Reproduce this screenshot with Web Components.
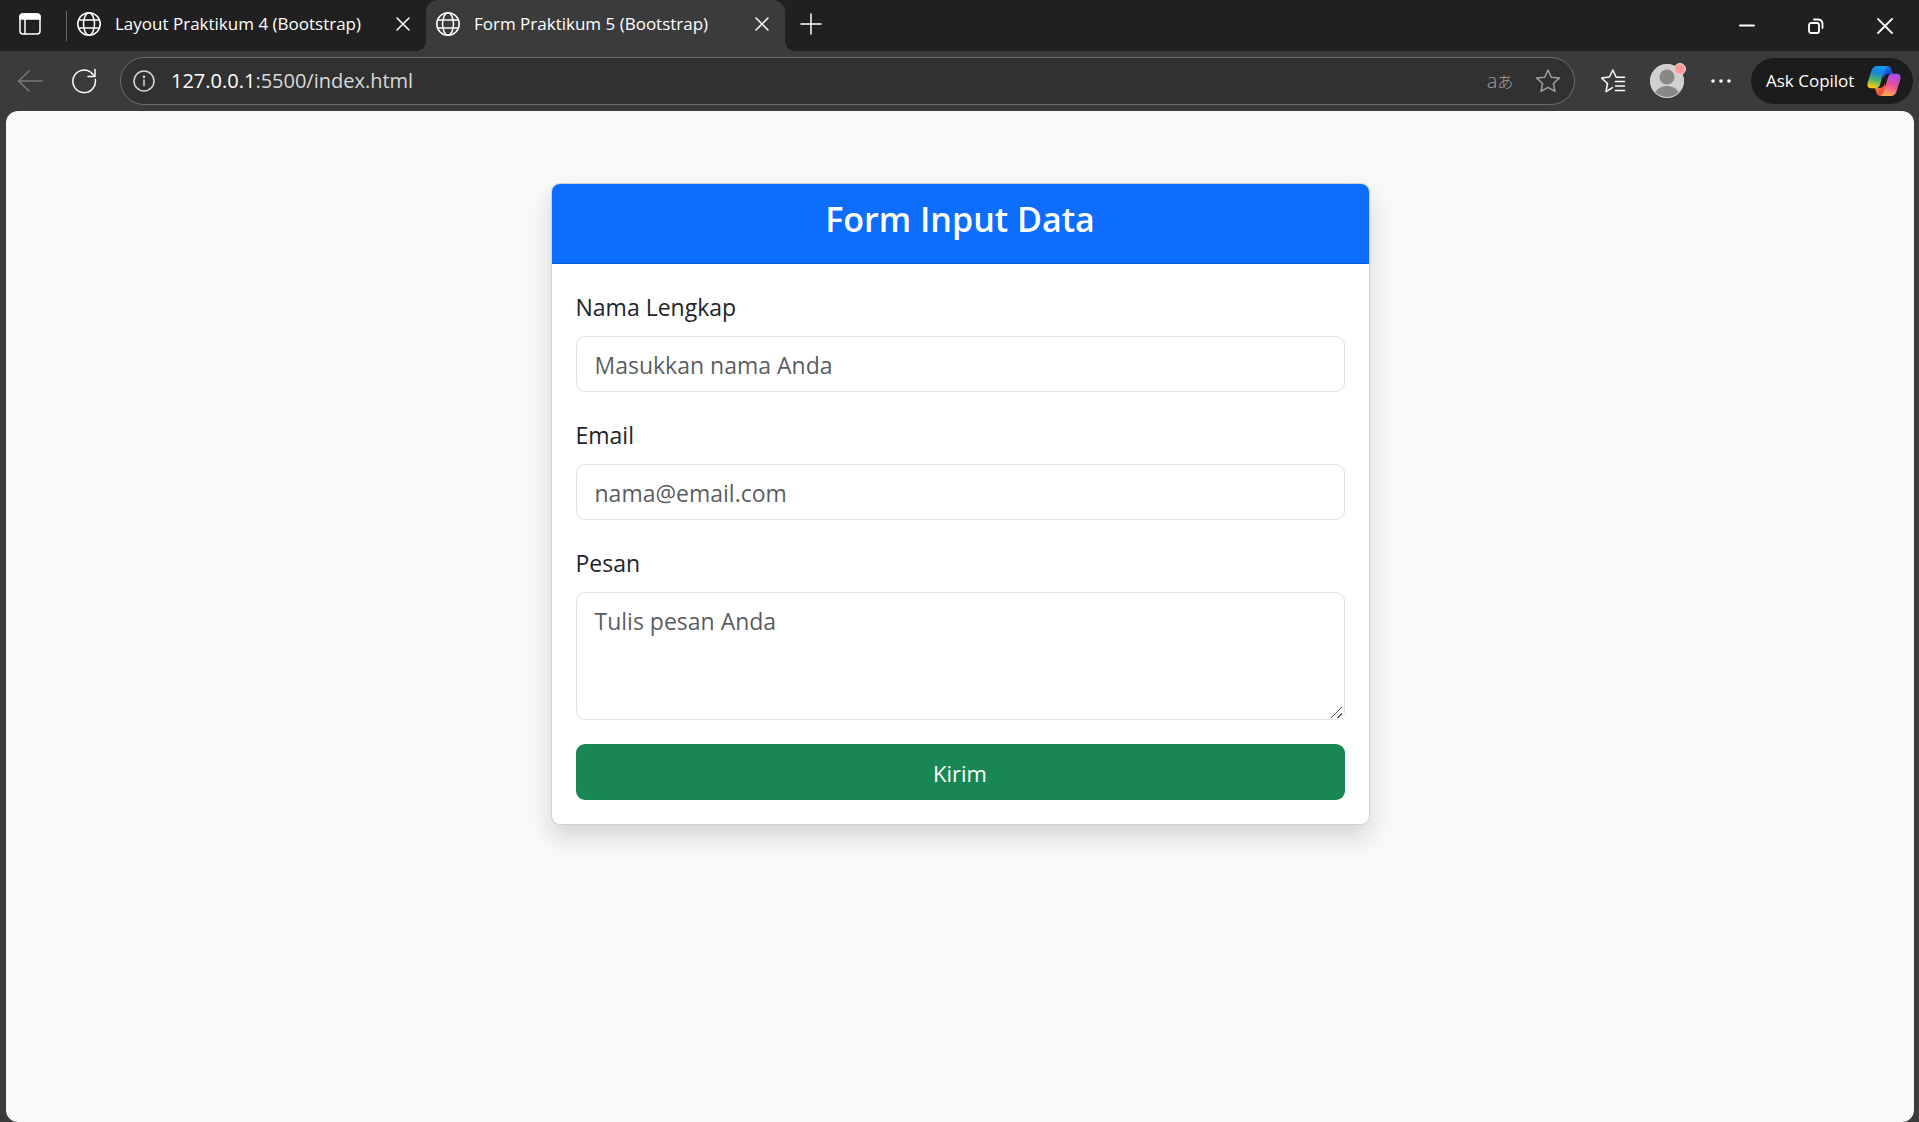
<!DOCTYPE html>
<html lang="id">
<head>
<meta charset="utf-8">
<title>Form Praktikum 5 (Bootstrap)</title>
<style>
  html, body { margin: 0; height: 100%; }
  body { background: #3b3b3b; font-family: "Open Sans", "Noto Sans", sans-serif; color: #212529; }
</style>
</head>
<body>
<browser-window>
  <tab-strip slot="tabs">
    <browser-tab label="Layout Praktikum 4 (Bootstrap)"></browser-tab>
    <browser-tab label="Form Praktikum 5 (Bootstrap)" active></browser-tab>
  </tab-strip>
  <browser-toolbar slot="toolbar"></browser-toolbar>
  <form-card heading="Form Input Data" action-label="Kirim">
    <form-field label="Nama Lengkap" type="text" placeholder="Masukkan nama Anda"></form-field>
    <form-field label="Email" type="email" placeholder="nama@email.com"></form-field>
    <form-field label="Pesan" type="textarea" placeholder="Tulis pesan Anda"></form-field>
  </form-card>
</browser-window>

<script>
const line = (w, h, body, sw = 1.5) =>
  `<svg width="${w}" height="${h}" viewBox="0 0 ${w} ${h}" fill="none" stroke="currentColor" stroke-width="${sw}" stroke-linecap="round" stroke-linejoin="round" aria-hidden="true">${body}</svg>`;

const ICONS = {
  tabs: line(24, 24, '<rect x="2" y="2" width="20" height="20" rx="3"/><path d="M2 7V5a3 3 0 0 1 3-3h14a3 3 0 0 1 3 3v2z" fill="currentColor"/><path d="M7 7v15"/>'),
  globe: line(24, 24, '<circle cx="12" cy="12" r="11.2"/><ellipse cx="12" cy="12" rx="5.5" ry="11.2"/><path d="M1.6 8h20.8M1.6 16h20.8"/>'),
  close: line(14, 14, '<path d="M1 1l12 12M13 1L1 13"/>'),
  plus: line(22, 22, '<path d="M11 1v20M1 11h20"/>'),
  minimise: line(16, 16, '<path d="M1 7.500h14"/>', 2),
  restore: line(16, 16, '<rect x="1" y="5" width="10" height="10" rx="2"/><path d="M6 1.500h4.500a4.500 4.500 0 0 1 4 4v4.500"/>', 1.8),
  exit: line(16, 16, '<path d="M1 1l14 14M15 1L1 15"/>', 1.8),
  back: line(26, 24, '<path d="M25 12H1.500M12 2L1.500 12 12 22"/>'),
  reload: line(26, 26, '<path d="M24.300 11.500A11.300 11.300 0 1 1 19.500 4L23.500 8"/><path d="M24 1.500V8.500H17"/>'),
  info: line(22, 22, '<circle cx="11" cy="11" r="10"/><path d="M11 10v5.500"/><circle cx="11" cy="6.800" r=".6" fill="currentColor"/>'),
  star: line(26, 26, '<path d="M13 2l3.300 7.200 8 .9-5.900 5.400 1.600 7.900-7-4-7 4 1.600-7.900-5.900-5.400 8-.9z"/>'),
  favorites: line(26, 26, '<path d="M12.500 19.600L6 23.600l1.500-8.100L1.600 10l7.800-1L12.800 2l3.300 7 1.700.3M15.500 13.500h9M15.500 18h9M15.500 22.500h9M17 9.300h7.500"/>'),
  more: '<svg width="22" height="8" viewBox="0 0 22 8" fill="currentColor" aria-hidden="true"><circle cx="3" cy="4" r="1.800"/><circle cx="11" cy="4" r="1.800"/><circle cx="19" cy="4" r="1.800"/></svg>',
  avatar: `<svg width="36" height="38" viewBox="0 0 36 38" overflow="visible" aria-hidden="true">
    <defs><clipPath id="disc"><circle cx="18" cy="19" r="17"/></clipPath></defs>
    <circle cx="18" cy="19" r="17" fill="#d2d0ce"/>
    <g clip-path="url(#disc)" fill="#8a8886"><circle cx="18" cy="15" r="7.500"/><ellipse cx="18" cy="35" rx="13" ry="11"/></g>
    <circle cx="18" cy="19" r="16.500" fill="none" stroke="#d2d0ce"/>
    <circle cx="31" cy="7" r="5.500" fill="#ff9d9d" stroke="#e9dcda" stroke-width="1"/></svg>`,
  copilot: `<svg width="34" height="32" viewBox="0 0 34 32" aria-hidden="true">
    <defs>
      <linearGradient id="cool" x1=".6" y1="0" x2=".35" y2="1"><stop offset="0" stop-color="#159df2"/><stop offset=".3" stop-color="#1783dd"/><stop offset=".65" stop-color="#4bb56c"/><stop offset="1" stop-color="#ffce0c"/></linearGradient>
      <linearGradient id="warm" x1=".65" y1="0" x2=".35" y2="1"><stop offset="0" stop-color="#a34bf0"/><stop offset=".5" stop-color="#ed4f98"/><stop offset="1" stop-color="#ffad55"/></linearGradient>
      <linearGradient id="fold" x1="0" y1="0" x2="1" y2="1"><stop offset="0" stop-color="#2aa4f4"/><stop offset=".6" stop-color="#1547ce"/><stop offset="1" stop-color="#2250e4"/></linearGradient>
      <linearGradient id="ember" x1="0" y1="0" x2="1" y2="1"><stop offset="0" stop-color="#ffb03a"/><stop offset=".5" stop-color="#f2553f"/><stop offset="1" stop-color="#e8453f"/></linearGradient>
    </defs>
    <path d="M14 1h6.500C23 1 24 2.500 24.600 4.500L26 9h-4.500c-3 0-4.300 1.600-5.200 4.500z" fill="url(#fold)"/>
    <path d="M20 31h-6.500C11 31 10 29.500 9.400 27.500L8 23h4.500c3 0 4.300-1.600 5.200-4.500z" fill="url(#ember)"/>
    <path d="M10.500 1H21c-2.200.3-3 2-3.700 4.400L13.200 19c-.9 3-2.200 4.200-5 4.200H4C1 23.200-.1 21 .6 18L4.500 5.500C5.500 2.500 7.500 1 10.500 1z" fill="url(#cool)"/>
    <path d="M23.500 31H13c2.200-.3 3-2 3.700-4.400L20.800 13c.9-3 2.200-4.200 5-4.200H30c3 0 4.100 2.200 3.400 5.200l-3.900 12.500c-1 3-3 4.500-6 4.500z" fill="url(#warm)"/></svg>`
};

class BaseElement extends HTMLElement {
  connectedCallback() {
    if (this.shadowRoot) return;
    this.attachShadow({ mode: 'open' }).innerHTML =
      `<style>*, *::before, *::after { box-sizing: border-box; }</style>${this.render()}`;
  }
  attr(name) { return this.getAttribute(name) || ''; }
}

class AppIcon extends BaseElement {
  render() {
    return `<style>:host { display: inline-flex; flex: none; } svg { display: block; }</style>${ICONS[this.attr('name')]}`;
  }
}

class IconButton extends BaseElement {
  render() {
    return `<style>
      :host { display: flex; flex: none; width: var(--size, 44px); height: 28px; }
      button { display: flex; align-items: center; justify-content: center; width: 100%; padding: 0; border: 0; background: none; color: inherit; }
    </style><button type="button" aria-label="${this.attr('label')}"><app-icon name="${this.attr('icon')}"></app-icon></button>`;
  }
}

class BrowserTab extends BaseElement {
  render() {
    return `<style>
      :host { box-sizing: border-box; display: flex; align-items: center; gap: 14px; flex: 1 1 0; min-width: 0; padding: 0 8px 3px 10px; position: relative; --size: 30px; }
      :host([active]) { background: #3b3b3b; border-radius: 12px 12px 0 0; }
      :host([active])::before, :host([active])::after { content: ""; position: absolute; bottom: 0; width: 10px; height: 10px; }
      :host([active])::before { right: 100%; background: radial-gradient(circle at 0 0, transparent 10px, #3b3b3b 10px); }
      :host([active])::after { left: 100%; background: radial-gradient(circle at 100% 0, transparent 10px, #3b3b3b 10px); }
      span { flex: 1; min-width: 0; overflow: hidden; white-space: nowrap; font-size: 17px; line-height: 24px; }
    </style>
    <app-icon name="globe"></app-icon><span>${this.attr('label')}</span><icon-button icon="close" label="Tutup tab"></icon-button>`;
  }
}

class TabStrip extends BaseElement {
  render() {
    return `<style>
      :host { display: flex; height: 51px; background: #202020; color: #fff; }
      .menu { display: flex; align-items: center; padding: 0 14px 3px 8px; }
      .rule { width: 1px; margin: 11px 0 10px; background: #6a6a6a; flex: none; }
      .tabs { display: flex; flex: 0 1 718px; min-width: 0; }
      .add { display: flex; align-items: center; padding: 0 4px 4px; }
      .window { display: flex; align-items: center; margin-left: auto; --size: 69px; }
    </style>
    <div class="menu"><icon-button icon="tabs" label="Menu tab"></icon-button></div>
    <div class="rule"></div>
    <div class="tabs"><slot></slot></div>
    <div class="add"><icon-button icon="plus" label="Tab baru"></icon-button></div>
    <div class="window">
      <icon-button icon="minimise" label="Kecilkan"></icon-button>
      <icon-button icon="restore" label="Pulihkan"></icon-button>
      <icon-button icon="exit" label="Tutup"></icon-button>
    </div>`;
  }
}

class BrowserToolbar extends BaseElement {
  render() {
    return `<style>
      :host { display: flex; align-items: center; height: 60px; padding: 0 6px 0 3px; background: #3b3b3b; color: #fff; --size: 54px; box-sizing: border-box; }
      .back { color: #7a7a7a; }
      .address { display: flex; align-items: center; flex: 1; min-width: 0; height: 48px; margin-left: 9px; padding: 0 3px 0 0; border: 1px solid #6c6c6c; border-radius: 24px; background: #313131; --size: 46px; }
      .address .quiet { color: #a0a0a0; }
      .address .info { color: #d8d8d8; }
      .url { flex: 1; min-width: 0; padding-left: 4px; font: 20px/28px "Open Sans", "Noto Sans", sans-serif; color: #dadada; white-space: nowrap; }
      .url b { font-weight: 400; color: #fff; }
      .translate { padding: 0; border: 0; background: none; color: #a0a0a0; width: 50px; font: 300 20px/24px "Open Sans", "Noto Sans CJK JP", sans-serif; white-space: nowrap; }
      .translate small { font-size: 16px; }
      .actions { display: flex; align-items: center; margin: 0 3px 0 11px; }
      .copilot { display: flex; align-items: center; justify-content: space-between; width: 162px; height: 46px; padding: 0 12px 0 15px; border: 0; border-radius: 23px; background: #1c1c1c; color: #fff; font: 17px/24px "Open Sans", "Noto Sans", sans-serif; white-space: nowrap; }
    </style>
    <icon-button class="back" icon="back" label="Kembali"></icon-button>
    <icon-button icon="reload" label="Muat ulang"></icon-button>
    <div class="address">
      <icon-button class="info" icon="info" label="Informasi situs"></icon-button>
      <div class="url"><b>127.0.0.1</b>:5500/index.html</div>
      <button class="translate" type="button" aria-label="Terjemahkan">a<small>あ</small></button>
      <icon-button class="quiet" icon="star" label="Tambah favorit"></icon-button>
    </div>
    <div class="actions">
      <icon-button icon="favorites" label="Favorit"></icon-button>
      <icon-button icon="avatar" label="Profil"></icon-button>
      <icon-button icon="more" label="Lainnya"></icon-button>
    </div>
    <button class="copilot" type="button">Ask Copilot<app-icon name="copilot"></app-icon></button>`;
  }
}

class BrowserWindow extends BaseElement {
  render() {
    return `<style>
      :host { display: flex; flex-direction: column; min-height: 100vh; }
      main { flex: 1; margin: 0 5px 0 6px; padding: 72px 0; border-radius: 12px; background: #f8f9fa; }
      .container { max-width: 1710px; margin: 0 auto; display: flex; justify-content: center; }
      .column { flex: 0 0 50%; padding: 0 18px; }
    </style>
    <slot name="tabs"></slot><slot name="toolbar"></slot>
    <main><div class="container"><div class="column"><slot></slot></div></div></main>`;
  }
}

class FormCard extends BaseElement {
  render() {
    return `<style>
      :host { display: block; border: 1px solid rgba(0,0,0,.175); border-radius: 9px; background: #fff; box-shadow: 0 12px 24px rgba(0,0,0,.15); }
      header { padding: 14px 24px 22px; border-bottom: 1px solid rgba(0,0,0,.175); border-radius: 8px 8px 0 0; background: #0d6efd; color: #fff; text-align: center; }
      h4 { margin: 0; font-size: 34px; line-height: 43px; font-weight: 600; }
      form { display: flex; flex-direction: column; gap: 24px; padding: 24px; }
      button { height: 56px; padding: 2px 18px 0; border: 0; border-radius: 9px; background: #198754; color: #fff; font: 22px/36px "Open Sans", "Noto Sans", sans-serif; }
    </style>
    <header><h4>${this.attr('heading')}</h4></header>
    <form><slot></slot><button type="button">${this.attr('action-label')}</button></form>`;
  }
}

class FormField extends BaseElement {
  render() {
    const hint = this.attr('placeholder');
    const control = this.attr('type') === 'textarea'
      ? `<textarea id="control" rows="3" placeholder="${hint}"></textarea>`
      : `<input id="control" type="${this.attr('type')}" placeholder="${hint}">`;
    return `<style>
      :host { display: flex; flex-direction: column; font-size: 23px; line-height: 36px; }
      label { padding: 1px 0 11px; }
      input, textarea { display: block; width: 100%; margin: 0; padding: 10px 18px 8px; border: 1px solid #dee2e6; border-radius: 9px; background: #fff; color: #212529; font: inherit; }
      input { height: 56px; }
      textarea { height: 128px; resize: vertical; }
      textarea::-webkit-resizer { background: linear-gradient(135deg, transparent 46%, #555 46% 54%, transparent 54% 74%, #555 74% 82%, transparent 82%) right 2px bottom 1px / 11px 11px no-repeat; }
      ::placeholder { color: rgba(33,37,41,.75); opacity: 1; }
    </style><label for="control">${this.attr('label')}</label>${control}`;
  }
}

customElements.define('app-icon', AppIcon);
customElements.define('icon-button', IconButton);
customElements.define('browser-tab', BrowserTab);
customElements.define('tab-strip', TabStrip);
customElements.define('browser-toolbar', BrowserToolbar);
customElements.define('browser-window', BrowserWindow);
customElements.define('form-card', FormCard);
customElements.define('form-field', FormField);
</script>
</body>
</html>
